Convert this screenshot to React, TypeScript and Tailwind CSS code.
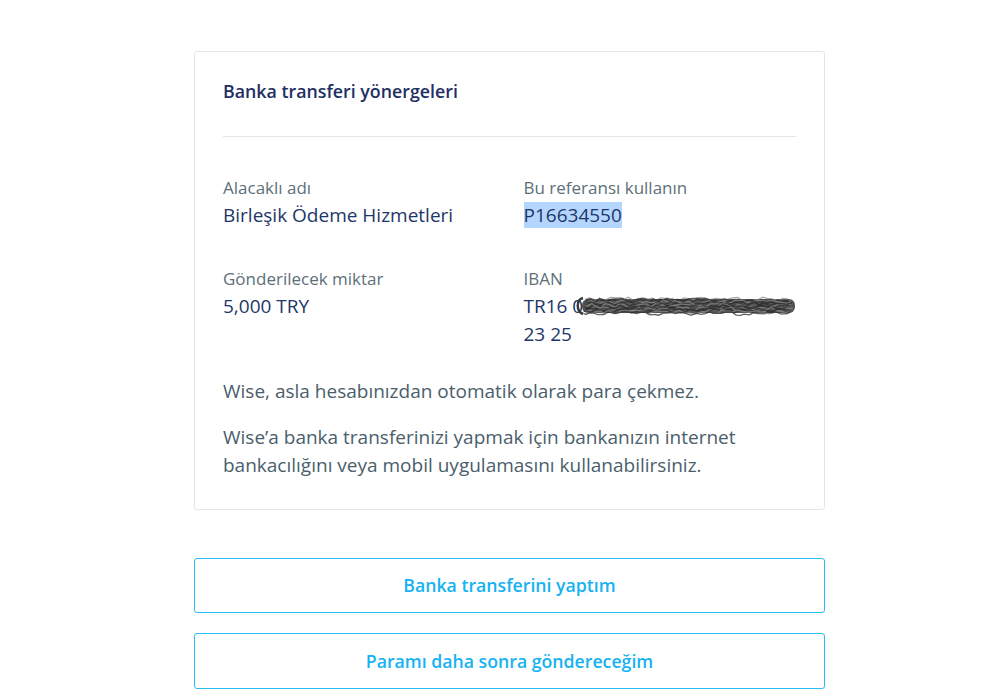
import React from "react";

function Scribble() {
  let seed = 7;
  const rnd = () => {
    seed = (seed * 9301 + 49297) % 233280;
    return seed / 233280;
  };
  const lines: string[] = [];
  for (let i = 0; i < 14; i++) {
    const y = 5 + i * 1.1;
    let d = `M ${8 + rnd() * 6} ${y.toFixed(1)}`;
    for (let x = 12; x <= 219; x += 3 + rnd() * 3) {
      const yy = y + (rnd() - 0.5) * 4;
      d += ` L ${x.toFixed(1)} ${yy.toFixed(1)}`;
    }
    lines.push(d);
  }
  return (
    <svg width="224" height="24" viewBox="0 0 224 24" className="absolute left-[50px] top-[2px]">
      <path d="M 9 4 C 2 6, 2 17, 9 20" stroke="#3a3a3a" strokeWidth="2.5" fill="none" />
      <rect x="8" y="5" width="213" height="14" rx="6" fill="#555555" />
      {lines.map((d, i) => (
        <path key={i} d={d} stroke={i % 3 === 0 ? "#8a8a8a" : "#2e2e2e"} strokeWidth="1.3" fill="none" opacity="0.75" />
      ))}
    </svg>
  );
}

export default function App() {
  return (
    <div className="min-h-[697px] w-full bg-white" style={{ fontFamily: "'Open Sans', 'Noto Sans', sans-serif" }}>
      <div className="ml-[194px] w-[631px] pt-[51px]">
        <div className="rounded-[3px] border border-[#e2e6e8] px-[28px] pt-[26px] pb-[30px]">
          <h2 className="text-[17.8px] font-semibold leading-[26px] text-[#1f2f63]">Banka transferi yönergeleri</h2>
          <div className="mt-[32px] h-px bg-[#e2e6e8]" />
          <div className="mt-[39px] grid grid-cols-2 gap-x-[28px] gap-y-[38px]">
            <div>
              <div className="text-[17px] leading-[24px] text-[#5d7079]">Alacaklı adı</div>
              <div className="mt-[1px] text-[19px] leading-[28px] text-[#1e3668]">Birleşik Ödeme Hizmetleri</div>
            </div>
            <div>
              <div className="text-[17px] leading-[24px] text-[#5d7079]">Bu referansı kullanın</div>
              <div className="mt-[1px] text-[19px] leading-[28px] text-[#1e3668]">
                <span className="bg-[#b4d5fe]">P16634550</span>
              </div>
            </div>
            <div>
              <div className="text-[17px] leading-[24px] text-[#5d7079]">Gönderilecek miktar</div>
              <div className="mt-[1px] text-[19px] leading-[28px] text-[#1e3668]">5,000 TRY</div>
            </div>
            <div>
              <div className="text-[17px] leading-[24px] text-[#5d7079]">IBAN</div>
              <div className="relative mt-[1px] text-[19px] leading-[28px] text-[#1e3668]">
                <div>TR16 0</div>
                <Scribble />
                <div>23 25</div>
              </div>
            </div>
          </div>
          <p className="mt-[29px] text-[19px] leading-[28px] text-[#4a5e6b]">Wise, asla hesabınızdan otomatik olarak para çekmez.</p>
          <p className="mt-[18px] text-[19px] leading-[28px] text-[#4a5e6b]">
            Wise’a banka transferinizi yapmak için bankanızın internet bankacılığını veya mobil uygulamasını kullanabilirsiniz.
          </p>
        </div>
        <div className="mt-[48px] flex flex-col gap-[20px]">
          <button className="h-[55px] w-full rounded-[3px] border border-[#29bdf6] bg-white text-[17.7px] font-semibold text-[#16b2f2]">
            Banka transferini yaptım
          </button>
          <button className="h-[56px] w-full rounded-[3px] border border-[#29bdf6] bg-white text-[17.7px] font-semibold text-[#16b2f2]">
            Paramı daha sonra göndereceğim
          </button>
        </div>
      </div>
    </div>
  );
}
